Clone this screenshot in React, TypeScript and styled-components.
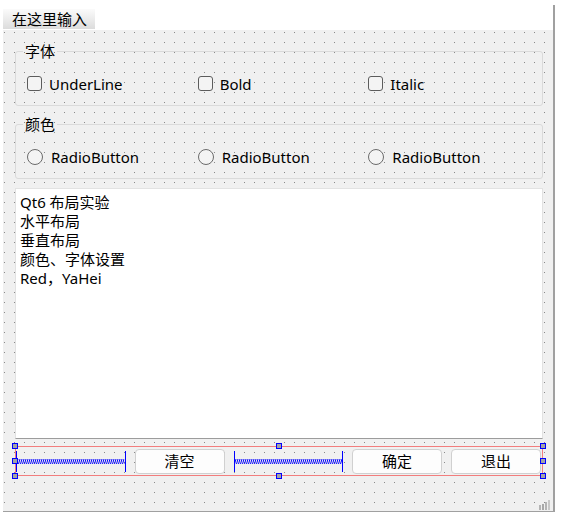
import React, { useId } from 'react';
import styled, { createGlobalStyle } from 'styled-components';

const GlobalStyle = createGlobalStyle`
  html, body { margin: 0; padding: 0; background: #ffffff; }
  body {
    font-family: "Noto Sans", "Noto Sans CJK SC", sans-serif;
    font-size: 15px;
    color: #000;
  }
  * { box-sizing: border-box; }
`;

const Window = styled.div`
  margin: 5px 0 0 3px;
  width: 552px;
  height: 507px;
  border-right: 2px solid #a0a0a0;
  border-bottom: 1px solid #a0a0a0;
  display: flex;
  flex-direction: column;
`;

const MenuBar = styled.div`
  height: 25px;
  padding-top: 4px;
  background: #ffffff;
  display: flex;
`;

const MenuItem = styled.div`
  height: 20px;
  padding: 0 8px 0 9px;
  line-height: 20px;
  background: linear-gradient(#fbfbfb, #dcdcdc);
`;

const Form = styled.div`
  flex: 1;
  display: flex;
  flex-direction: column;
  padding: 13px 10px 0 12px;
  background-color: #f0f0f0;
  background-image: radial-gradient(circle at 1.5px 2.5px, #8a8a8a 0.75px, transparent 0.9px);
  background-size: 10px 10px;
`;

const GroupBox = styled.fieldset<{ $top?: number }>`
  margin: ${(p) => p.$top ?? 0}px 0 0 0;
  padding: 0;
  min-width: 0;
  border: 1px solid #dadada;
  border-radius: 3px;
`;

const GroupTitle = styled.legend`
  margin-left: 7px;
  padding: 0 2px;
  line-height: 17px;
  font-size: 15px;
`;

const GroupRow = styled.div`
  display: grid;
  grid-template-columns: repeat(3, 1fr);
  align-items: center;
  height: 45px;
  padding: 2px 3px 0 11px;
`;

const Option = styled.label`
  display: flex;
  align-items: center;
  gap: 7px;
  line-height: 20px;
  white-space: nowrap;
`;

const CheckBox = styled.span`
  width: 15px;
  height: 15px;
  border: 1px solid #5c5c5c;
  border-radius: 3px;
  background: #f4f4f4;
  flex: none;
`;

const Radio = styled.span`
  width: 16px;
  height: 16px;
  border: 1px solid #6a6a6a;
  border-radius: 50%;
  background: #f4f4f4;
  flex: none;
  margin-right: 1px;
`;

const TextEdit = styled.div`
  margin-top: 9px;
  height: 251px;
  background: #ffffff;
  border: 1px solid #e2e2e2;
  border-bottom-color: #9c9c9c;
  padding: 4px 4px;
  line-height: 19px;
  font-size: 15px;
`;

const Line = styled.div`
  white-space: pre;
`;

const LayoutFrame = styled.div`
  position: relative;
  margin-top: 7px;
  height: 30px;
  border: 1px solid #f27d7d;
  display: flex;
  align-items: center;
  gap: 9px;
  padding: 0 1px 0 0;
`;

const Handle = styled.span<{ $x: 'l' | 'm' | 'r'; $y: 't' | 'm' | 'b' }>`
  position: absolute;
  width: 6px;
  height: 6px;
  background: #a4a4a4;
  border: 1px solid #0000ff;
  ${(p) => (p.$x === 'l' ? 'left: -4px;' : p.$x === 'r' ? 'right: -4px;' : 'left: calc(50% - 3px);')}
  ${(p) => (p.$y === 't' ? 'top: -4px;' : p.$y === 'b' ? 'bottom: -4px;' : 'top: calc(50% - 3px);')}
`;

const SpacerBox = styled.div`
  flex: 1;
  height: 21px;
  border-left: 1px solid #0000ff;
  border-right: 1px solid #0000ff;
  display: flex;
  align-items: center;
`;

const Spring = styled.svg`
  display: block;
  width: 100%;
  height: 5px;
`;

const Button = styled.button`
  width: 90px;
  height: 25px;
  flex: none;
  border: 1px solid #d0d0d0;
  border-radius: 4px;
  background: #fdfdfd;
  font-family: "Noto Sans", "Noto Sans CJK SC", sans-serif;
  font-size: 15px;
  color: #000;
  padding: 0;
  line-height: 23px;
`;

const Footer = styled.div`
  margin-top: auto;
  display: flex;
  justify-content: flex-end;
  padding: 0 0 1px 0;
  margin-right: -8px;
`;

function Spacer() {
  const id = useId().replace(/:/g, '');
  return (
    <SpacerBox>
      <Spring>
        <defs>
          <pattern id={`sp${id}`} width="2" height="5" patternUnits="userSpaceOnUse">
            <path d="M-0.5 5 L1 0 M1.5 5 L3 0" stroke="#0000ff" strokeWidth="1" fill="none" />
          </pattern>
        </defs>
        <rect x="0" y="0" width="100%" height="5" fill={`url(#sp${id})`} />
      </Spring>
    </SpacerBox>
  );
}

function Grip() {
  return (
    <svg width="12" height="10" viewBox="0 0 12 10">
      <rect x="0" y="5" width="2" height="5" fill="#b4b4b4" />
      <rect x="3" y="4" width="2" height="6" fill="#a8a8a8" />
      <rect x="6" y="2" width="2" height="8" fill="#b4b4b4" />
      <rect x="9" y="0" width="2" height="10" fill="#c8c8c8" />
    </svg>
  );
}

export default function App() {
  return (
    <>
      <GlobalStyle />
      <Window>
        <MenuBar>
          <MenuItem>在这里输入</MenuItem>
        </MenuBar>
        <Form>
          <GroupBox>
            <GroupTitle>字体</GroupTitle>
            <GroupRow>
              {['UnderLine', 'Bold', 'Italic'].map((t) => (
                <Option key={t}>
                  <CheckBox />
                  {t}
                </Option>
              ))}
            </GroupRow>
          </GroupBox>
          <GroupBox $top={10}>
            <GroupTitle>颜色</GroupTitle>
            <GroupRow>
              {[0, 1, 2].map((i) => (
                <Option key={i}>
                  <Radio />
                  RadioButton
                </Option>
              ))}
            </GroupRow>
          </GroupBox>
          <TextEdit>
            <Line>Qt6 布局实验</Line>
            <Line>水平布局</Line>
            <Line>垂直布局</Line>
            <Line>颜色、字体设置</Line>
            <Line>Red，YaHei</Line>
          </TextEdit>
          <LayoutFrame>
            <Spacer />
            <Button>清空</Button>
            <Spacer />
            <Button>确定</Button>
            <Button>退出</Button>
            <Handle $x="l" $y="t" />
            <Handle $x="l" $y="m" />
            <Handle $x="l" $y="b" />
            <Handle $x="m" $y="t" />
            <Handle $x="m" $y="b" />
            <Handle $x="r" $y="t" />
            <Handle $x="r" $y="m" />
            <Handle $x="r" $y="b" />
          </LayoutFrame>
          <Footer>
            <Grip />
          </Footer>
        </Form>
      </Window>
    </>
  );
}
